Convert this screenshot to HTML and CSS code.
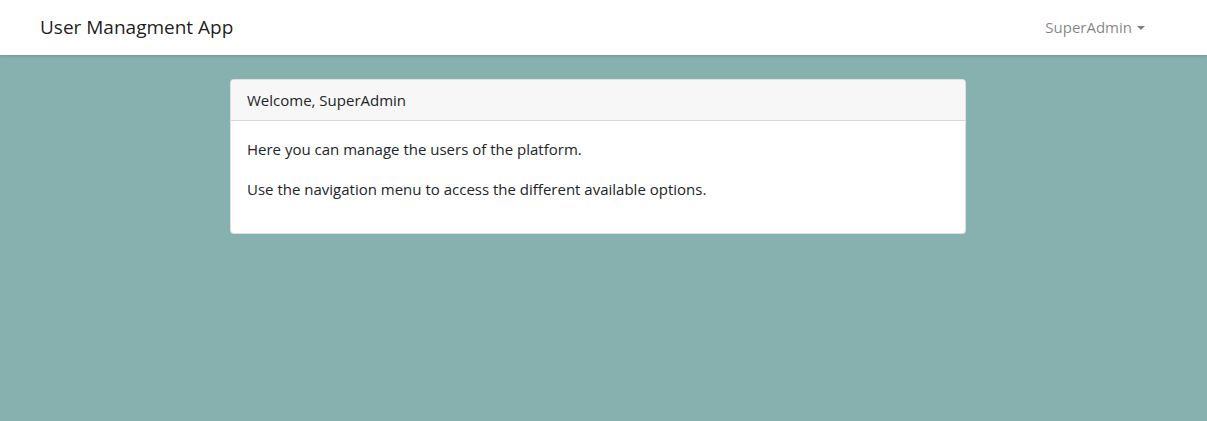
FILE: index.html
```html
<!DOCTYPE html>
<html lang="en">
<head>
<meta charset="utf-8">
<title>User Managment App</title>
<link rel="stylesheet" href="styles.css">
</head>
<body>
<nav class="navbar">
  <a class="brand" href="#">User Managment App</a>
  <a class="user-toggle" href="#">SuperAdmin<span class="caret"></span></a>
</nav>
<main class="content">
  <section class="card">
    <div class="card-header">Welcome, SuperAdmin</div>
    <div class="card-body">
      <p>Here you can manage the users of the platform.</p>
      <p>Use the navigation menu to access the different available options.</p>
    </div>
  </section>
</main>
</body>
</html>
```

FILE: styles.css
```css
html, body {
  margin: 0;
  padding: 0;
  height: 100%;
}
body {
  background: #87b1ae;
  font-family: "Open Sans", "Noto Sans", sans-serif;
  font-size: 15px;
  line-height: 1.5;
  color: #212529;
}
.navbar {
  height: 55px;
  box-sizing: border-box;
  background: #fff;
  display: flex;
  align-items: center;
  justify-content: space-between;
  padding: 0 62px 0 40px;
  box-shadow: 0 1px 3px rgba(0,0,0,0.18);
  position: relative;
}
.brand {
  font-size: 19px;
  color: rgba(0,0,0,0.9);
  text-decoration: none;
}
.user-toggle {
  font-size: 15px;
  color: rgba(0,0,0,0.5);
  text-decoration: none;
  display: flex;
  align-items: center;
}
.caret {
  display: inline-block;
  margin-left: 5px;
  border-top: 4.8px solid rgba(0,0,0,0.5);
  border-left: 4.8px solid transparent;
  border-right: 4.8px solid transparent;
}
.content {
  padding: 24px 0 0 230px;
}
.card {
  width: 736px;
  box-sizing: border-box;
  background: #fff;
  border: 1px solid rgba(0,0,0,0.125);
  border-radius: 4px;
}
.card-header {
  padding: 8px 16px;
  background: #f7f7f7;
  border-bottom: 1px solid rgba(0,0,0,0.125);
  border-radius: 3px 3px 0 0;
  line-height: 24px;
}
.card-body {
  padding: 16px 16px 16px;
}
.card-body p {
  margin: 0 0 16px;
  line-height: 24px;
}
```
